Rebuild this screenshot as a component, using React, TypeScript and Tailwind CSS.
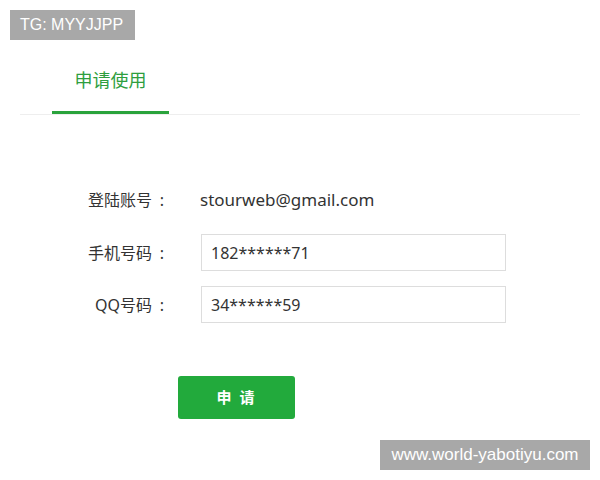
function Label({ text }: { text: string }) {
  return (
    <div className="w-[172px] flex justify-end items-center text-[16px] text-[#333]">
      <span>{text}</span>
      <span className="inline-block w-[20px] text-center">:</span>
    </div>
  );
}

export default function App() {
  const font = { fontFamily: '"Noto Sans", "Noto Sans CJK SC", sans-serif' };
  return (
    <div className="relative w-[600px] h-[480px] bg-white overflow-hidden" style={font}>
      <div className="absolute left-[10px] top-[10px] w-[125px] h-[30px] bg-[#a8a8a8] text-white text-[16px] leading-[30px] pl-[10px] font-['Liberation_Sans',sans-serif]">
        TG: MYYJJPP
      </div>
      <div className="pt-[64px] px-[20px]">
        <div className="flex border-b border-[#eeeeee] h-[51px]">
          <div className="ml-[32px] w-[117px] flex flex-col items-center">
            <div className="text-[18px] leading-[32px] text-[#2e9e3e]">申请使用</div>
            <div className="mt-auto h-[3px] w-full bg-[#2aa33c]" />
          </div>
        </div>
      </div>
      <div className="mt-[70px] flex flex-col">
        <div className="flex items-center h-[30px]">
          <Label text="登陆账号" />
          <div className="ml-[28px] text-[17px] text-[#333]">stourweb@gmail.com</div>
        </div>
        <div className="flex items-center mt-[19px]">
          <Label text="手机号码" />
          <div className="ml-[29px] w-[305px] h-[37px] border border-[#dddddd] flex items-center pl-[9px] text-[16px] text-[#333]">182******71</div>
        </div>
        <div className="flex items-center mt-[15px]">
          <Label text="QQ号码" />
          <div className="ml-[29px] w-[305px] h-[37px] border border-[#dddddd] flex items-center pl-[9px] text-[16px] text-[#333]">34******59</div>
        </div>
        <div className="ml-[178px] mt-[53px] w-[117px] h-[43px] rounded-[3px] bg-[#22aa3c] text-white text-[15px] font-bold flex items-center justify-center tracking-[2px]">
          申 请
        </div>
      </div>
      <div className="absolute left-[380px] top-[440px] w-[210px] h-[30px] bg-[#a8a8a8] text-white text-[17px] leading-[30px] text-center font-['Liberation_Sans',sans-serif]">
        www.world-yabotiyu.com
      </div>
    </div>
  );
}
